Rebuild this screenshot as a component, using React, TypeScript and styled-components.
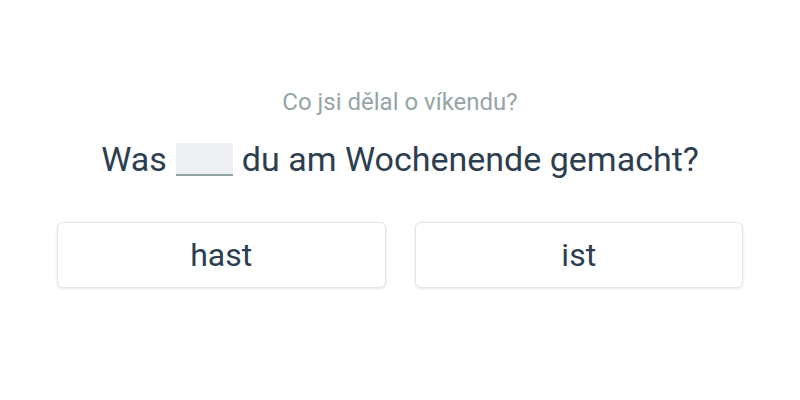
import React from "react";
import styled, { createGlobalStyle } from "styled-components";

const GlobalStyle = createGlobalStyle`
  html, body {
    margin: 0;
    padding: 0;
    background: #ffffff;
    font-family: Roboto, "Noto Sans", sans-serif;
  }
`;

const Page = styled.div`
  width: 800px;
  height: 400px;
  display: flex;
  flex-direction: column;
  align-items: center;
  padding-top: 87px;
  box-sizing: border-box;
`;

const Translation = styled.p`
  margin: 0;
  font-size: 24px;
  line-height: 30px;
  color: #95a5a6;
`;

const Sentence = styled.h2`
  margin: 21px 0 0;
  font-size: 34px;
  font-weight: 400;
  line-height: 42px;
  color: #2c3e50;
  display: flex;
  align-items: center;
  gap: 9px;
`;

const Blank = styled.span`
  display: inline-block;
  width: 57px;
  height: 31px;
  background: #eef0f3;
  border-bottom: 2px solid #8fa3a3;
`;

const Options = styled.div`
  margin-top: 42px;
  display: grid;
  grid-template-columns: 1fr 1fr;
  gap: 29px;
  width: 686px;
`;

const Option = styled.button`
  height: 66px;
  background: #ffffff;
  border: 1px solid #e2e4e7;
  border-radius: 6px;
  box-shadow: 0 1px 3px rgba(0, 0, 0, 0.1);
  font-family: Roboto, "Noto Sans", sans-serif;
  font-size: 32px;
  color: #2c3e50;
  cursor: pointer;
`;

export default function App() {
  return (
    <>
      <GlobalStyle />
      <Page>
        <Translation>Co jsi dělal o víkendu?</Translation>
        <Sentence>
          Was <Blank /> du am Wochenende gemacht?
        </Sentence>
        <Options>
          <Option>hast</Option>
          <Option>ist</Option>
        </Options>
      </Page>
    </>
  );
}
